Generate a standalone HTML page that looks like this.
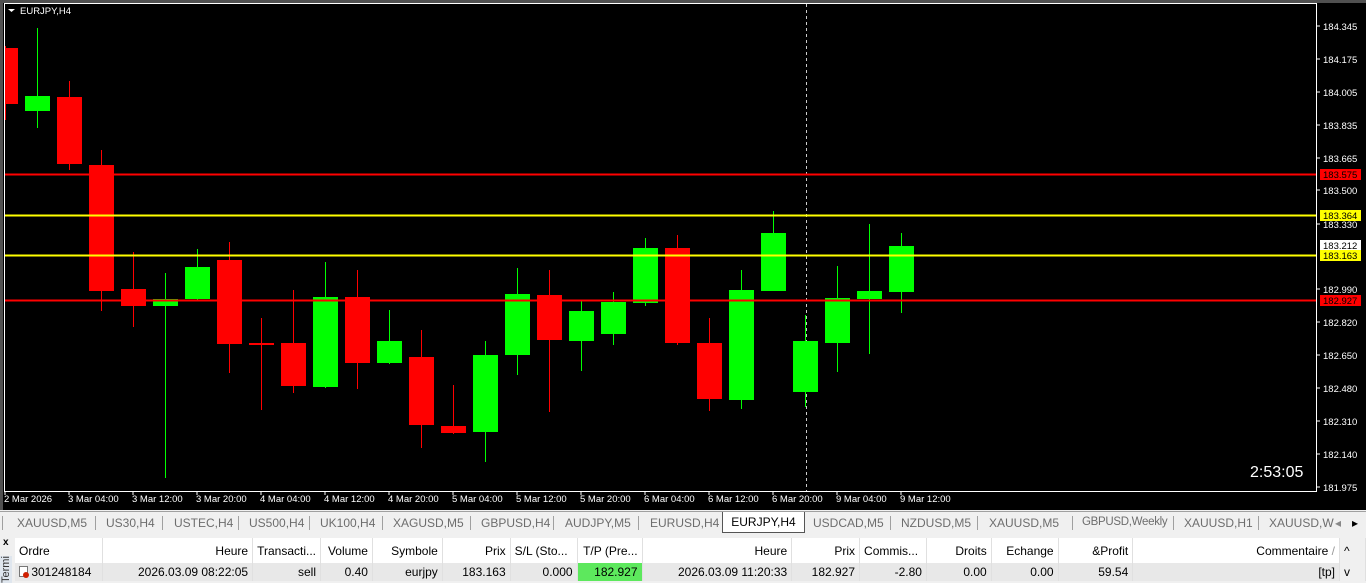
<!DOCTYPE html>
<html><head><meta charset="utf-8"><style>
*{margin:0;padding:0;box-sizing:border-box}
body{width:1366px;height:583px;overflow:hidden;background:#f0f0f0;font-family:"Liberation Sans",sans-serif;position:relative}
.tabs{position:absolute;left:0;top:511px;width:1366px;height:22px;background:#f0f0f0;border-top:1px solid #a0a0a0;font-size:12px;color:#6d6d6d}
.tabs span{position:absolute;top:4px}
.sep{position:absolute;top:4px;width:1px;height:14px;background:#a0a0a0}
.act{position:absolute;left:722px;top:0;width:83px;height:21px;background:#fff;border:1px solid #555;border-top:none;color:#000;font-size:12px;text-align:center;padding-top:3px}
.term{position:absolute;left:0;top:534px;width:1366px;height:49px;background:#f0f0f0}
table{position:absolute;left:15px;top:538px;border-collapse:collapse;font-size:12px;table-layout:fixed}
td{height:25px;border-right:1px solid #e0e0e0;padding:0 4px;white-space:nowrap;overflow:hidden}
tr.h td{background:#fff;height:25px}
tr.r td{background:#e8e8e8;height:18px}
</style></head><body>
<svg width="1366" height="510" style="position:absolute;left:0;top:0" font-family="Liberation Sans,sans-serif">
<rect width="1366" height="510" fill="#000"/>
<rect width="1366" height="3" fill="#505050"/>
<rect width="3" height="510" fill="#505050"/>
<rect x="4.5" y="3.5" width="1312" height="488" fill="none" stroke="#fff" stroke-width="1"/>
<path d="M8 9h7l-3.5 3z" fill="#fff"/>
<text x="20" y="14" fill="#fff" font-size="9.5">EURJPY,H4</text>
<line x1="806.5" y1="4" x2="806.5" y2="491" stroke="#ccc" stroke-dasharray="3,3"/>
<g>
<g fill="#ff0000" stroke="#ff0000"><line x1="5.5" y1="46" x2="5.5" y2="120"/><rect x="5" y="48" width="13" height="56" stroke="none"/></g>
<g fill="#00ff00" stroke="#00ff00"><line x1="37.5" y1="28" x2="37.5" y2="128"/><rect x="25" y="96" width="25" height="15" stroke="none"/></g>
<g fill="#ff0000" stroke="#ff0000"><line x1="69.5" y1="81" x2="69.5" y2="170"/><rect x="57" y="97" width="25" height="67" stroke="none"/></g>
<g fill="#ff0000" stroke="#ff0000"><line x1="101.5" y1="150" x2="101.5" y2="311"/><rect x="89" y="165" width="25" height="126" stroke="none"/></g>
<g fill="#ff0000" stroke="#ff0000"><line x1="133.5" y1="252" x2="133.5" y2="327"/><rect x="121" y="289" width="25" height="17" stroke="none"/></g>
<g fill="#00ff00" stroke="#00ff00"><line x1="165.5" y1="273" x2="165.5" y2="478"/><rect x="153" y="299" width="25" height="7" stroke="none"/></g>
<g fill="#00ff00" stroke="#00ff00"><line x1="197.5" y1="249" x2="197.5" y2="300"/><rect x="185" y="267" width="25" height="32" stroke="none"/></g>
<g fill="#ff0000" stroke="#ff0000"><line x1="229.5" y1="242" x2="229.5" y2="373"/><rect x="217" y="260" width="25" height="84" stroke="none"/></g>
<g fill="#ff0000" stroke="#ff0000"><line x1="261.5" y1="318" x2="261.5" y2="410"/><rect x="249" y="343" width="25" height="2" stroke="none"/></g>
<g fill="#ff0000" stroke="#ff0000"><line x1="293.5" y1="290" x2="293.5" y2="393"/><rect x="281" y="343" width="25" height="43" stroke="none"/></g>
<g fill="#00ff00" stroke="#00ff00"><line x1="325.5" y1="262" x2="325.5" y2="388"/><rect x="313" y="297" width="25" height="90" stroke="none"/></g>
<g fill="#ff0000" stroke="#ff0000"><line x1="357.5" y1="270" x2="357.5" y2="389"/><rect x="345" y="297" width="25" height="66" stroke="none"/></g>
<g fill="#00ff00" stroke="#00ff00"><line x1="389.5" y1="310" x2="389.5" y2="364"/><rect x="377" y="341" width="25" height="22" stroke="none"/></g>
<g fill="#ff0000" stroke="#ff0000"><line x1="421.5" y1="330" x2="421.5" y2="448"/><rect x="409" y="357" width="25" height="68" stroke="none"/></g>
<g fill="#ff0000" stroke="#ff0000"><line x1="453.5" y1="385" x2="453.5" y2="434"/><rect x="441" y="426" width="25" height="7" stroke="none"/></g>
<g fill="#00ff00" stroke="#00ff00"><line x1="485.5" y1="341" x2="485.5" y2="462"/><rect x="473" y="355" width="25" height="77" stroke="none"/></g>
<g fill="#00ff00" stroke="#00ff00"><line x1="517.5" y1="268" x2="517.5" y2="375"/><rect x="505" y="294" width="25" height="61" stroke="none"/></g>
<g fill="#ff0000" stroke="#ff0000"><line x1="549.5" y1="270" x2="549.5" y2="412"/><rect x="537" y="295" width="25" height="45" stroke="none"/></g>
<g fill="#00ff00" stroke="#00ff00"><line x1="581.5" y1="300" x2="581.5" y2="371"/><rect x="569" y="311" width="25" height="30" stroke="none"/></g>
<g fill="#00ff00" stroke="#00ff00"><line x1="613.5" y1="292" x2="613.5" y2="345"/><rect x="601" y="302" width="25" height="32" stroke="none"/></g>
<g fill="#00ff00" stroke="#00ff00"><line x1="645.5" y1="238" x2="645.5" y2="306"/><rect x="633" y="248" width="25" height="55" stroke="none"/></g>
<g fill="#ff0000" stroke="#ff0000"><line x1="677.5" y1="235" x2="677.5" y2="345"/><rect x="665" y="248" width="25" height="95" stroke="none"/></g>
<g fill="#ff0000" stroke="#ff0000"><line x1="709.5" y1="318" x2="709.5" y2="411"/><rect x="697" y="343" width="25" height="56" stroke="none"/></g>
<g fill="#00ff00" stroke="#00ff00"><line x1="741.5" y1="270" x2="741.5" y2="409"/><rect x="729" y="290" width="25" height="110" stroke="none"/></g>
<g fill="#00ff00" stroke="#00ff00"><line x1="773.5" y1="211" x2="773.5" y2="291"/><rect x="761" y="233" width="25" height="58" stroke="none"/></g>
<g fill="#00ff00" stroke="#00ff00"><line x1="805.5" y1="315" x2="805.5" y2="407"/><rect x="793" y="341" width="25" height="51" stroke="none"/></g>
<g fill="#00ff00" stroke="#00ff00"><line x1="837.5" y1="266" x2="837.5" y2="372"/><rect x="825" y="298" width="25" height="45" stroke="none"/></g>
<g fill="#00ff00" stroke="#00ff00"><line x1="869.5" y1="224" x2="869.5" y2="354"/><rect x="857" y="291" width="25" height="8" stroke="none"/></g>
<g fill="#00ff00" stroke="#00ff00"><line x1="901.5" y1="233" x2="901.5" y2="313"/><rect x="889" y="246" width="25" height="46" stroke="none"/></g>
</g>
<line x1="5" y1="174.5" x2="1316" y2="174.5" stroke="#ff0000" stroke-width="2"/>
<line x1="5" y1="215.5" x2="1316" y2="215.5" stroke="#ffff00" stroke-width="2"/>
<line x1="5" y1="255.5" x2="1316" y2="255.5" stroke="#ffff00" stroke-width="2"/>
<line x1="5" y1="300.5" x2="1316" y2="300.5" stroke="#ff0000" stroke-width="2"/>
<g fill="#fff" font-size="9.5">
<text x="1323" y="30">184.345</text><text x="1323" y="63">184.175</text><text x="1323" y="96">184.005</text>
<text x="1323" y="129">183.835</text><text x="1323" y="162">183.665</text><text x="1323" y="194">183.500</text>
<text x="1323" y="228">183.330</text><text x="1323" y="293">182.990</text><text x="1323" y="326">182.820</text>
<text x="1323" y="359">182.650</text><text x="1323" y="392">182.480</text><text x="1323" y="425">182.310</text>
<text x="1323" y="458">182.140</text><text x="1323" y="491">181.975</text>
</g>
<g stroke="#fff"><path d="M1317 26h3M1317 59h3M1317 92h3M1317 125h3M1317 158h3M1317 190h3M1317 224h3M1317 289h3M1317 322h3M1317 355h3M1317 388h3M1317 421h3M1317 454h3M1317 487h3"/></g>
<rect x="1320" y="169" width="41" height="11" fill="#ff0000"/><text x="1323" y="178" font-size="9.5" fill="#000">183.575</text>
<rect x="1320" y="210" width="41" height="11" fill="#ffff00"/><text x="1323" y="219" font-size="9.5" fill="#000">183.364</text>
<rect x="1320" y="240" width="41" height="10" fill="#fff"/><text x="1323" y="249" font-size="9.5" fill="#000">183.212</text>
<rect x="1320" y="250" width="41" height="11" fill="#ffff00"/><text x="1323" y="259" font-size="9.5" fill="#000">183.163</text>
<rect x="1320" y="295" width="41" height="11" fill="#ff0000"/><text x="1323" y="304" font-size="9.5" fill="#000">182.927</text>
<text x="1250" y="477" fill="#fff" font-size="16">2:53:05</text>
<g fill="#fff" font-size="9.5">
<text x="4" y="502">2 Mar 2026</text><text x="68" y="502">3 Mar 04:00</text><text x="132" y="502">3 Mar 12:00</text>
<text x="196" y="502">3 Mar 20:00</text><text x="260" y="502">4 Mar 04:00</text><text x="324" y="502">4 Mar 12:00</text>
<text x="388" y="502">4 Mar 20:00</text><text x="452" y="502">5 Mar 04:00</text><text x="516" y="502">5 Mar 12:00</text>
<text x="580" y="502">5 Mar 20:00</text><text x="644" y="502">6 Mar 04:00</text><text x="708" y="502">6 Mar 12:00</text>
<text x="772" y="502">6 Mar 20:00</text><text x="836" y="502">9 Mar 04:00</text><text x="900" y="502">9 Mar 12:00</text>
</g>
<g stroke="#fff"><path d="M5 492v3M69 492v3M133 492v3M197 492v3M261 492v3M325 492v3M389 492v3M453 492v3M517 492v3M581 492v3M645 492v3M709 492v3M773 492v3M837 492v3M901 492v3"/></g>
</svg>
<div class="tabs">
<div class="sep" style="left:2px"></div>
<span style="left:17px">XAUUSD,M5</span><div class="sep" style="left:95px"></div>
<span style="left:106px">US30,H4</span><div class="sep" style="left:162px"></div>
<span style="left:174px">USTEC,H4</span><div class="sep" style="left:238px"></div>
<span style="left:249px">US500,H4</span><div class="sep" style="left:309px"></div>
<span style="left:320px">UK100,H4</span><div class="sep" style="left:382px"></div>
<span style="left:393px">XAGUSD,M5</span><div class="sep" style="left:470px"></div>
<span style="left:481px">GBPUSD,H4</span><div class="sep" style="left:553px"></div>
<span style="left:565px">AUDJPY,M5</span><div class="sep" style="left:638px"></div>
<span style="left:650px">EURUSD,H4</span>
<div class="act">EURJPY,H4</div>
<span style="left:813px">USDCAD,M5</span><div class="sep" style="left:890px"></div>
<span style="left:901px">NZDUSD,M5</span><div class="sep" style="left:977px"></div>
<span style="left:989px">XAUUSD,M5</span><div class="sep" style="left:1072px"></div>
<span style="left:1082px;font-size:11.5px;letter-spacing:-0.3px">GBPUSD,Weekly</span><div class="sep" style="left:1173px"></div>
<span style="left:1184px">XAUUSD,H1</span><div class="sep" style="left:1258px"></div>
<span style="left:1269px">XAUUSD,W</span>
<span style="left:1335px;color:#888">◂</span><span style="left:1352px;color:#000">▸</span>
</div>
<div class="term">
<div style="position:absolute;left:3px;top:3px;font-size:10px;font-weight:bold">x</div>
<div style="position:absolute;left:0;top:22px;width:12px;height:27px;background:#dfe6ee;font-size:11px;color:#333;writing-mode:vertical-rl;transform:rotate(180deg);overflow:hidden">Terminal</div>
</div>
<table>
<colgroup><col style="width:88px"><col style="width:150px"><col style="width:65px"><col style="width:52px"><col style="width:70px"><col style="width:68px"><col style="width:67px"><col style="width:65px"><col style="width:150px"><col style="width:68px"><col style="width:67px"><col style="width:65px"><col style="width:67px"><col style="width:75px"><col style="width:208px"><col style="width:26px"></colgroup>
<tr class="h"><td>Ordre</td><td style="text-align:right">Heure</td><td>Transacti...</td><td style="text-align:right">Volume</td><td style="text-align:right">Symbole</td><td style="text-align:right">Prix</td><td>S/L (Sto...</td><td style="text-align:right">T/P (Pre...</td><td style="text-align:right">Heure</td><td style="text-align:right">Prix</td><td>Commis...</td><td style="text-align:right">Droits</td><td style="text-align:right">Echange</td><td style="text-align:right">&amp;Profit</td><td style="text-align:right">Commentaire <span style="color:#999">/</span></td><td style="background:#f0f0f0">^</td></tr>
<tr class="r"><td><span style="display:inline-block;width:9px;height:11px;border:1px solid #777;background:#fff;vertical-align:-1px;position:relative"><span style="position:absolute;left:3px;top:5px;width:6px;height:6px;border-radius:50%;background:#d02000"></span></span> 301248184</td><td style="text-align:right">2026.03.09 08:22:05</td><td style="text-align:right">sell</td><td style="text-align:right">0.40</td><td style="text-align:right">eurjpy</td><td style="text-align:right">183.163</td><td style="text-align:right">0.000</td><td style="text-align:right;background:#5de85d">182.927</td><td style="text-align:right">2026.03.09 11:20:33</td><td style="text-align:right">182.927</td><td style="text-align:right">-2.80</td><td style="text-align:right">0.00</td><td style="text-align:right">0.00</td><td style="text-align:right">59.54</td><td style="text-align:right">[tp]</td><td style="background:#f0f0f0">v</td></tr>
</table>
</body></html>
